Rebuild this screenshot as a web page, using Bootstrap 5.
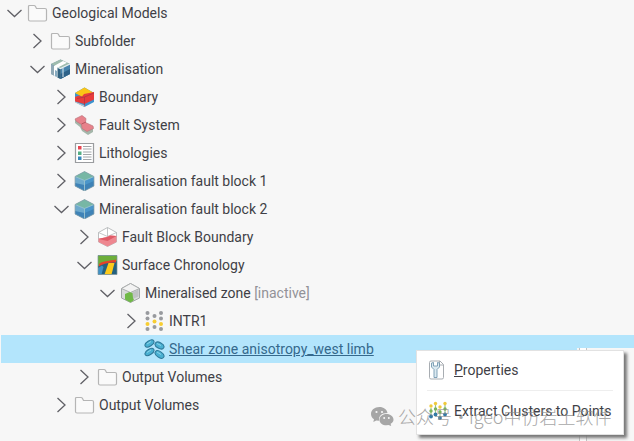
<!DOCTYPE html>
<html lang="en">
<head>
<meta charset="utf-8">
<meta name="viewport" content="width=device-width, initial-scale=1">
<title>Geological Models</title>
<link href="https://cdn.jsdelivr.net/npm/bootstrap@5.3.0/dist/css/bootstrap.min.css" rel="stylesheet">
<style>
body{background:#f7f7f7;color:#3f3f46;font:14px/28px Roboto,"Noto Sans CJK SC",sans-serif;overflow:hidden}
.tree-list{margin:-1px 0 0}
.tree-row{height:28px;white-space:nowrap}
.tree-row.selected{background:#b3e5fc;margin-left:1px}
.tree-row.selected .spacer{width:16px}
.lv0{padding-left:6px}.lv1{padding-left:29px}.lv2{padding-left:53px}.lv3{padding-left:76px}.lv4{padding-left:99px}.lv5{padding-left:123px}
.twist{width:17px;height:20px;color:#606066;margin-right:4px}
.twist svg{display:block;width:17px;height:20px}
.glyph{width:21px;height:20px;margin-right:4px;flex:none}
.inactive{color:#929297}
.tree-link{color:#35698c}
.tree-link:hover{color:#1f4f70}
.panes{left:577px;right:0;top:348px;bottom:0;background:#f7f7f7}
.split{width:8px;margin-left:2px;background:#fff;border:solid #c4c4c4;border-width:0 1px}
.ctx{left:416px;top:350px;width:208px;padding:1px 10px 5px;background:#fff;border:1px solid #e2e2e2;box-shadow:3px 3px 3px #777}
.ctx button{height:36px;padding:0;color:#3f3f46;white-space:nowrap}
.ctx .glyph{margin-right:6px}
.ctx hr{margin:2px 0;border-color:#bbb}
.watermark{left:370px;top:402px;color:#8b8b8b;font:300 18px/28px "Noto Sans CJK SC",sans-serif;opacity:.75;white-space:nowrap;pointer-events:none}
.watermark svg{width:24px;height:20px;margin-right:4px}
.watermark .dot{width:17px;text-align:center}
</style>
<script src="https://cdn.jsdelivr.net/npm/bootstrap@5.3.0/dist/js/bootstrap.bundle.min.js"></script>
</head>
<body class="position-relative vh-100">
<svg class="d-none" aria-hidden="true">
<symbol id="down" viewBox="0 0 17 20"><path d="M1.500 7l7 6.500L15.500 7" fill="none" stroke="currentColor" stroke-width="1.300"/></symbol>
<symbol id="right" viewBox="0 0 17 20"><path d="M4.500 3l7.500 7-7.500 7" fill="none" stroke="currentColor" stroke-width="1.300"/></symbol>
<symbol id="folder" viewBox="0 0 21 20"><path d="M2.500 2.500h4.500q1 0 1.500 1l1 2H18a1.500 1.500 0 0 1 1.500 1.500v9.500A1.500 1.500 0 0 1 18 18H3a1.500 1.500 0 0 1-1.500-1.500V3.500q0-1 1-1z" fill="#fafafa" stroke="#b5b5b5" stroke-width="1.200"/></symbol>
<symbol id="model" viewBox="0 0 21 20"><path d="M10.500.5L20 5v10l-9.500 5L1 15V5z" fill="#7d9eae"/><path d="M1 5L10.500.5 20 5l-9.500 4.500z" fill="#9fbcae"/><path d="M4 7l9-5 4 1.700L8 8.500V18.500l-4-2z" fill="#fff"/><path d="M10.500 9.500L20 5v10l-9.500 5z" fill="#4884ac"/><path d="M1 5.500l3 1.500v9.500L1 15z" fill="#90a9b6"/><path d="M5 11l2 1v6l-2-1z" fill="#86abc0"/><path d="M7.500 8.500l3 1V20l-3-1.500z" fill="#31627f"/><path d="M10.500 15l9.500-5v5l-9.500 5z" fill="#2e6289"/><path d="M13 9v9" stroke="#dce9ef" fill="none"/><path d="M8 8.500l2.500 1L20 5" stroke="#e8f0f2" stroke-width="1.300" fill="none"/></symbol>
<symbol id="bound" viewBox="0 0 21 20"><path d="M1 6l9.500-5.500L20 6v9l-9.500 5L1 15z" fill="#3c93ce"/><path d="M1 6l9.500-5.500L20 6l-9.500 5z" fill="#fbc516"/><path d="M1 10l4-1.500 3 1 2-2.500L20 5v7.500l-9.500 4.500L1 14.500z" fill="#e83c3c"/><path d="M10.500 10v9.500M10.500 10L20 6M3 11.500l7.500-1.500" stroke="#af3542" stroke-width=".8" fill="none"/><path d="M1 14.500v1l9.500 4.500v-1.500z" fill="#bcc8cd"/></symbol>
<symbol id="fault" viewBox="0 0 21 20"><path d="M1 4.500V8l5 4 2 4 6 4 5-3v-4z" fill="#a4b6aa"/><path d="M1 4l7-3.500 4 3-.5 4L19 11l.5 2.500L13 16.500l-5-3-.5-4-5-3z" fill="#e8828b" stroke="#bd777e" stroke-width=".7"/><path d="M7.500 9l4.500-2" stroke="#ba5661"/></symbol>
<symbol id="litho" viewBox="0 0 21 20"><path d="M1.500.5h18v19h-18z" fill="#fff" stroke="#9a9c9f" stroke-width="1.200"/><path d="M4 3h3.500v3.500H4z" fill="#e74451"/><path d="M4 8.500h3.500V12H4z" fill="#55af84"/><path d="M4 13.500h3.500V17H4z" fill="#3887bb"/><path d="M9 3.500h8.500M9 6h8.500M9 9h8.500M9 11.500h8.500M9 14h8.500M9 16.500h8.500" stroke="#999ca0" stroke-width=".9"/></symbol>
<symbol id="block" viewBox="0 0 21 20"><path d="M1 5.500L10.500.5 20 5.500V15l-9.500 5L1 15z" fill="#4b96ca"/><path d="M1 5.500L10.500.5 20 5.500l-9.500 4z" fill="#77b7a5"/><path d="M1 5.500l9.500 4V20L1 15z" fill="#6eaacd"/><path d="M1 12l9.500 2 9.500-4v5l-9.500 5L1 15z" fill="#3f83b7"/><path d="M1 5.500l9.500 4 9.500-4M10.500 9.500V20" fill="none" stroke="#9bc4cf" stroke-width=".9"/><path d="M1 5.500L10.500.5 20 5.500V15l-9.500 5L1 15z" fill="none" stroke="#8fa3a9" stroke-width=".7"/></symbol>
<symbol id="fbb" viewBox="0 0 21 20"><path d="M1.500 5.500l9-5 9 5V15l-9 4.500-9-4.500z" fill="#fff" stroke="#b4b7b9" stroke-width=".9"/><path d="M1.500 5.500l9 4 9-4M10.500 .5V10" fill="none" stroke="#b4b7b9" stroke-width=".8"/><path d="M1.500 11.500l7-1 4-2 7 .5v6l-9 4.500-9-4.500z" fill="#ee8790"/><path d="M1.500 12l6-1.500 3-.5 3-1.500 6 .5-9 5z" fill="#e05b67"/></symbol>
<symbol id="chron" viewBox="0 0 21 20"><path d="M1 .5h19v19H1z" fill="#24617f"/><path d="M1 .5h19V6L7 8 1 11z" fill="#6cae3a"/><path d="M1 13l4-2.500L6.500 12 4.500 19.500H1z" fill="#3f91c6"/><path d="M2 9C6 5.500 13 6 19 4.500V7.500C13 7.500 7 8 2 11.500z" fill="#e64229"/><path d="M11.500 8h6L14.500 19.500H7.500z" fill="#fdca1b"/><path d="M1 .5h19v19H1z" fill="none" stroke="#7b9299" stroke-width=".7"/></symbol>
<symbol id="zone" viewBox="0 0 21 20"><path d="M1.500 5.500l9-5 9 5V15l-9 4.500-9-4.500z" fill="#d9dbdb" stroke="#a2a6a7"/><path d="M1.500 5.500l9 4 9-4-9-5z" fill="#f3f3f3" stroke="#abafaf"/><path d="M11.500 10l7-3.500v7l-7 3z" fill="#bfc2c3"/><path d="M5 11l4.500-2 3 1 .5 5 1 2-3.500 2.500L5 16.500z" fill="#70b947"/></symbol>
<symbol id="intr" viewBox="0 0 21 20"><g fill="#989a9e"><circle cx="3.500" cy="2" r="2"/><circle cx="3.500" cy="7.500" r="2"/><circle cx="3.500" cy="18" r="2"/><circle cx="10.500" cy="5" r="2"/><circle cx="10.500" cy="16" r="2"/><circle cx="17" cy="2" r="2"/><circle cx="17" cy="7.500" r="2"/><circle cx="17" cy="18" r="2"/></g><g fill="#f8ce32"><circle cx="3.500" cy="13" r="2"/><circle cx="10.500" cy="10.500" r="2"/><circle cx="17" cy="13" r="2"/></g></symbol>
<symbol id="shear" viewBox="0 0 21 20"><g fill="#49b0d2" stroke="#2d7797" stroke-width="1"><ellipse cx="5.500" cy="4.500" rx="5" ry="2.700" transform="rotate(-32 5.500 4.500)"/><ellipse cx="15.500" cy="6.500" rx="4.800" ry="2.900" transform="rotate(28 15.500 6.500)"/><ellipse cx="5.500" cy="13" rx="5" ry="2.700" transform="rotate(-32 5.500 13)"/><ellipse cx="15.500" cy="15.500" rx="5" ry="2.900" transform="rotate(34 15.500 15.500)"/></g><path d="M3 5l4-2.500M13 4.500l4 2M3 13.500l4-2.500M13 13l4 2.500" stroke="#8bd4e9"/></symbol>
<symbol id="props" viewBox="0 0 21 20"><path d="M4 1h9l3.500 3.500V17.500a1.500 1.500 0 0 1-1.500 1.500H4A1.500 1.500 0 0 1 2.500 17.500v-15A1.500 1.500 0 0 1 4 1z" fill="#fff" stroke="#a8adb2"/><path d="M12.500 1v4h4" fill="none" stroke="#a8adb2"/><path d="M4.500 3v4l2.500 2.500v8h3v-8L12.500 7V3L10.500 2.500v3.500h-4V2.500z" fill="#dceaf1" stroke="#7499b0" stroke-width=".9"/></symbol>
<symbol id="extract" viewBox="0 0 21 20"><g stroke-width="1.200"><path d="M4 7v9M8.500 4v11M13 9v8M18 3v12" stroke="#9dc08b"/></g><g fill="#efca3c"><circle cx="4" cy="5" r="1.700"/><circle cx="8.500" cy="2.500" r="1.700"/><circle cx="13" cy="6" r="1.700"/><circle cx="18" cy="2.500" r="1.700"/></g><g fill="#7ab35b"><circle cx="4" cy="10" r="1.700"/><circle cx="8.500" cy="8" r="1.700"/><circle cx="13" cy="11" r="1.700"/><circle cx="18" cy="8" r="1.700"/></g><g fill="#347aa5"><circle cx="4" cy="15.500" r="1.900"/><circle cx="8.500" cy="13.500" r="1.900"/><circle cx="13" cy="17" r="1.900"/><circle cx="18" cy="13.500" r="1.900"/></g></symbol>
</svg>
<main>
<ul class="tree-list list-unstyled" role="tree" id="tree">
<li class="tree-row d-flex align-items-center lv0" role="treeitem"><button class="twist btn p-0 border-0" aria-label="Collapse"><svg><use href="#down"/></svg></button><svg class="glyph"><use href="#folder"/></svg><span>Geological Models</span></li>
<li class="tree-row d-flex align-items-center lv1" role="treeitem"><button class="twist btn p-0 border-0" aria-label="Expand"><svg><use href="#right"/></svg></button><svg class="glyph"><use href="#folder"/></svg><span>Subfolder</span></li>
<li class="tree-row d-flex align-items-center lv1" role="treeitem"><button class="twist btn p-0 border-0" aria-label="Collapse"><svg><use href="#down"/></svg></button><svg class="glyph"><use href="#model"/></svg><span>Mineralisation</span></li>
<li class="tree-row d-flex align-items-center lv2" role="treeitem"><button class="twist btn p-0 border-0" aria-label="Expand"><svg><use href="#right"/></svg></button><svg class="glyph"><use href="#bound"/></svg><span>Boundary</span></li>
<li class="tree-row d-flex align-items-center lv2" role="treeitem"><button class="twist btn p-0 border-0" aria-label="Expand"><svg><use href="#right"/></svg></button><svg class="glyph"><use href="#fault"/></svg><span>Fault System</span></li>
<li class="tree-row d-flex align-items-center lv2" role="treeitem"><button class="twist btn p-0 border-0" aria-label="Expand"><svg><use href="#right"/></svg></button><svg class="glyph"><use href="#litho"/></svg><span>Lithologies</span></li>
<li class="tree-row d-flex align-items-center lv2" role="treeitem"><button class="twist btn p-0 border-0" aria-label="Expand"><svg><use href="#right"/></svg></button><svg class="glyph"><use href="#block"/></svg><span>Mineralisation fault block 1</span></li>
<li class="tree-row d-flex align-items-center lv2" role="treeitem"><button class="twist btn p-0 border-0" aria-label="Collapse"><svg><use href="#down"/></svg></button><svg class="glyph"><use href="#block"/></svg><span>Mineralisation fault block 2</span></li>
<li class="tree-row d-flex align-items-center lv3" role="treeitem"><button class="twist btn p-0 border-0" aria-label="Expand"><svg><use href="#right"/></svg></button><svg class="glyph"><use href="#fbb"/></svg><span>Fault Block Boundary</span></li>
<li class="tree-row d-flex align-items-center lv3" role="treeitem"><button class="twist btn p-0 border-0" aria-label="Collapse"><svg><use href="#down"/></svg></button><svg class="glyph"><use href="#chron"/></svg><span>Surface Chronology</span></li>
<li class="tree-row d-flex align-items-center lv4" role="treeitem"><button class="twist btn p-0 border-0" aria-label="Collapse"><svg><use href="#down"/></svg></button><svg class="glyph"><use href="#zone"/></svg><span>Mineralised zone <span class="inactive">[inactive]</span></span></li>
<li class="tree-row d-flex align-items-center lv5" role="treeitem"><button class="twist btn p-0 border-0" aria-label="Expand"><svg><use href="#right"/></svg></button><svg class="glyph"><use href="#intr"/></svg><span>INTR1</span></li>
<li class="tree-row selected d-flex align-items-center lv5" role="treeitem" aria-selected="true"><span class="twist spacer"></span><svg class="glyph"><use href="#shear"/></svg><a class="tree-link" href="#tree">Shear zone anisotropy_west limb</a></li>
<li class="tree-row d-flex align-items-center lv3" role="treeitem"><button class="twist btn p-0 border-0" aria-label="Expand"><svg><use href="#right"/></svg></button><svg class="glyph"><use href="#folder"/></svg><span>Output Volumes</span></li>
<li class="tree-row d-flex align-items-center lv2" role="treeitem"><button class="twist btn p-0 border-0" aria-label="Expand"><svg><use href="#right"/></svg></button><svg class="glyph"><use href="#folder"/></svg><span>Output Volumes</span></li>
</ul>
</main>
<div class="panes position-absolute d-flex"><div class="split"></div></div>
<div class="ctx position-absolute" role="menu">
<button class="d-flex align-items-center w-100 border-0 bg-transparent" role="menuitem"><svg class="glyph"><use href="#props"/></svg><span><u>P</u>roperties</span></button>
<hr>
<button class="d-flex align-items-center w-100 border-0 bg-transparent" role="menuitem"><svg class="glyph"><use href="#extract"/></svg><span>Extract Clusters to Points</span></button>
</div>
<div class="watermark position-absolute d-flex align-items-center">
<svg viewBox="0 0 24 20"><path d="M9.500 1C4.500 1 1 4 1 8c0 2.200 1 4 3 5.300L3.300 16l3-1.600 3 .4C8 10.500 11.500 7 17.500 7 17 3.500 13.500 1 9.500 1z" fill="#8b8b8b"/><path d="M16.500 8c-4 0-7 2.500-7 5.700s3 5.600 7 5.600l2-.3 2.700 1-.6-2.200c1.800-1 2.900-2.500 2.900-4.100C23.500 10.500 20.500 8 16.500 8z" fill="#8b8b8b"/><g fill="#f7f7f7"><circle cx="6.500" cy="6" r="1.100"/><circle cx="12" cy="6" r="1.100"/><circle cx="14.200" cy="12" r="1"/><circle cx="18.800" cy="12" r="1"/></g></svg>
<span>公众号</span><span class="dot">·</span><span>igeo中仿岩土软件</span>
</div>
</body>
</html>
